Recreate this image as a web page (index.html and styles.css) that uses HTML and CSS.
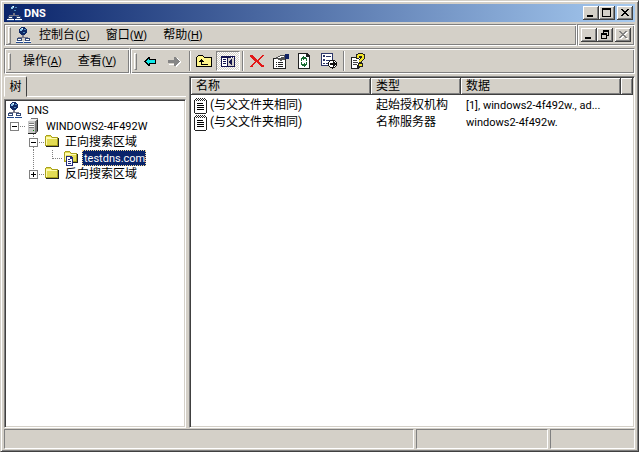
FILE: index.html
```html
<!DOCTYPE html>
<html lang="zh-CN">
<head>
<meta charset="utf-8">
<title>DNS</title>
<link rel="stylesheet" href="styles.css">
</head>
<body>
<svg class="defs" aria-hidden="true">
  <symbol id="dns" viewBox="0 0 16 16">
    <path d="M6 0h4v1h1v1h1v4h-1v1h-1v1H6V7H5V6H4V2h1V1h1z" fill="#102a66"/>
    <path d="M5 2h1V1h2v2H7v1H5z" fill="#8fc4e8"/><path d="M9 2h2v1H9zM8 5h2v1H8z" fill="#4d8cc0"/>
    <path d="M7 1h1v1H7z" fill="#fff"/>
    <path d="M7 8h2v2h4v1H3v-1h4z" fill="#778"/>
    <path d="M2 11h5v3H2zM10 11h5v3h-5z" fill="#334a78"/><path d="M3 12h3v1H3zM11 12h3v1h-3z" fill="#fff"/>
    <path d="M1 14h7v1H1zM9 14h7v1H9z" fill="#fff"/><path d="M1 15h7v1H1zM9 15h7v1H9z" fill="#224a90"/>
  </symbol>
  <symbol id="server" viewBox="0 0 16 16">
    <path d="M3 3l3-3h7v13l-3 3H3z" fill="#777"/><path d="M3 3h7v12H3z" fill="#c8c8c8"/>
    <path d="M3 3l3-2h6l-2 2z" fill="#eee"/><path d="M4 5h5v1H4zM4 7h5v1H4zM4 9h5v1H4z" fill="#777"/>
    <path d="M4 6h5v1H4zM4 8h5v1H4z" fill="#fff"/><path d="M8 12h1v1H8z" fill="#080"/><path d="M3 15h8v1H3zM12 2h1v11h-1z" fill="#222"/>
  </symbol>
  <symbol id="folder" viewBox="0 0 16 16">
    <path d="M1 2h1V1h5v1h1v1h6v9H1z" fill="#a9a11c"/>
    <path d="M2 2h5v1h1v1h5v7H2z" fill="#e3dc55"/>
    <path d="M2 3h5v1h6v1H3v6H2z" fill="#fffbb0"/>
    <path d="M14 4h1v9H2v-1h12z" fill="#222"/>
  </symbol>
  <symbol id="zone" viewBox="0 0 16 16">
    <path d="M1 2h1V1h5v1h1v1h6v9H1z" fill="#a9a11c"/>
    <path d="M2 2h5v1h1v1h5v7H2z" fill="#e3dc55"/>
    <path d="M2 3h5v1h6v1H3v5H2z" fill="#fffbb0"/><path d="M14 4h1v9H8v-1h6z" fill="#222"/>
    <path d="M3 6h5l2 2v8H3z" fill="#222a78"/><path d="M4 7h3v2h2v6H4z" fill="#fff"/>
    <path d="M5 9h2v1H5zM5 11h3v1H5zM5 13h3v1H5z" fill="#222a78"/>
  </symbol>
  <symbol id="record" viewBox="0 0 14 16">
    <path d="M1 2h11v13H1z" fill="#fff"/>
    <path d="M0 2h1v13H0zM12 2h1v13h-1zM1 15h11v1H1zM1 1h1v1H1zM3 1h1v1H3zM5 1h1v1H5zM7 1h1v1H7zM9 1h1v1H9zM11 1h1v1h-1zM2 0h1v1H2zM4 0h1v1H4zM6 0h1v1H6zM8 0h1v1H8zM10 0h1v1h-1zM2 2h1v1H2zM4 2h1v1H4zM6 2h1v1H6zM8 2h1v1H8zM10 2h1v1h-1z" fill="#222"/>
    <path d="M3 5h6v1H3zM3 7h7v1H3zM3 9h7v1H3zM3 11h7v1H3z" fill="#000"/>
  </symbol>
  <symbol id="min" viewBox="0 0 12 10"><path d="M2 7h6v2H2z"/></symbol>
  <symbol id="close" viewBox="0 0 12 10"><path d="M2 1h2v1h1v1h2V2h1V1h2v1H9v1H8v1H7v1h1v1h1v1h1v1H8V7H7V6H5v1H4v1H2V7h1V6h1V5h1V4H4V3H3V2H2z"/></symbol>
</svg>
<div class="window">
  <header class="titlebar">
    <svg class="icon"><use href="#dns"/></svg>
    <h1>DNS</h1>
    <div class="controls">
      <button class="ctl" aria-label="最小化"><svg><use href="#min"/></svg></button>
      <button class="ctl" aria-label="最大化"><svg viewBox="0 0 12 10"><path d="M1 0h9v9H1zM2 2v6h7V2z" fill-rule="evenodd"/></svg></button>
      <button class="ctl apart" aria-label="关闭"><svg><use href="#close"/></svg></button>
    </div>
  </header>

  <nav class="menubar" aria-label="菜单">
    <div class="band grow">
      <span class="grip"></span>
      <svg class="icon"><use href="#dns"/></svg>
      <button class="menu">控制台<span class="key">(<u>C</u>)</span></button>
      <button class="menu">窗口<span class="key">(<u>W</u>)</span></button>
      <button class="menu">帮助<span class="key">(<u>H</u>)</span></button>
    </div>
    <div class="band controls child">
      <button class="ctl" aria-label="最小化子窗口"><svg><use href="#min"/></svg></button>
      <button class="ctl" aria-label="还原子窗口"><svg viewBox="0 0 12 10"><path d="M4 0h6v6H8v3H2V3h2zM5 2v1h3v2h1V2zM3 5v3h4V5z" fill-rule="evenodd"/></svg></button>
      <button class="ctl apart off" disabled aria-label="关闭子窗口"><svg><use href="#close"/></svg></button>
    </div>
  </nav>

  <div class="toolbar">
    <div class="band actions">
      <span class="grip"></span>
      <button class="menu">操作<span class="key">(<u>A</u>)</span></button>
      <button class="menu">查看<span class="key">(<u>V</u>)</span></button>
    </div>
    <div class="band tools grow">
      <span class="grip"></span>
      <button class="tool" aria-label="后退"><svg viewBox="0 0 16 16"><path d="M1 8h1V7h1V6h1V5h1V4h2v2h6v5H7v2H5v-1H4v-1H3v-1H2V9H1z" fill="#000"/><path d="M3 8h1V7h1V6h1v1h6v3H6v1H5v-1H4V9H3z" fill="#10e8e8"/></svg></button>
      <button class="tool" aria-label="前进" disabled><svg viewBox="0 0 16 16"><path d="M9 5h2v1h1v1h1v1h1v2h-1v1h-1v1h-1v1h-1v1H9v-2H2v-1h7z" fill="#fff"/><path d="M1 7h6V4h2v1h1v1h1v1h1v1h1v1h-1v1h-1v1h-1v1H9v1H7v-3H1z" fill="#858585"/></svg></button>
      <span class="sep"></span>
      <button class="tool" aria-label="上一级"><svg viewBox="0 0 16 16"><path d="M0 4h1V3h1V2h5v1h1v1h8v10H0z" fill="#000"/><path d="M1 4h1V3h5v1h1v1h7v8H1z" fill="#fff58a"/><path d="M5 6h1v1h1v1h1v1H6v2h6v1H5V9H3V8h1V7h1z" fill="#000"/></svg></button>
      <button class="tool pressed" aria-label="显示/隐藏控制台树" aria-pressed="true"><svg viewBox="0 0 16 16"><path d="M1 3h14v11H1z" fill="#151550"/><path d="M2 5h5v8H2z" fill="#fff"/><path d="M8 5h6v8H8z" fill="#d4d0c8"/><path d="M3 6h3v1H3zM3 8h3v1H3zM3 10h3v1H3zM12 6v6h-1v-1h-1v-1H9V8h1V7h1V6z" fill="#151550"/><path d="M11 4h1v1h-1zM13 4h1v1h-1z" fill="#fff"/></svg></button>
      <span class="sep"></span>
      <button class="tool" aria-label="删除"><svg viewBox="0 0 16 16"><path d="M2 2h2v1h1v1h1v1h1v1h1v1h1V6h1V5h1V4h1V3h1V2h2v1h-1v1h-1v1h-1v1h-1v1h-1v2h1v1h1v1h1v1h2v2h-3v-1h-1v-1h-1v-1H9v-1H8v-1H7v1H6v1H5v1H4v2H1v-1h1v-1h1v-1h1v-1h1v-1h1V8H5V7H4V6H3V5H2V4H1V2z" fill="#e31818"/></svg></button>
      <button class="tool" aria-label="属性"><svg viewBox="0 0 16 16"><path d="M0 5h13v11H0z" fill="#222"/><path d="M1 6h11v9H1z" fill="#fff"/><path d="M3 9h1v1H3zM5 9h5v1H5zM3 11h1v1H3zM5 11h5v1H5zM3 13h1v1H3zM5 13h5v1H5z" fill="#222"/><path d="M3 4h2V3h2V2h5v5H9v1H7V7H5V6H3z" fill="#555"/><path d="M4 4h3V3h4v1H8v1H5z" fill="#fff"/><path d="M12 1h4v5h-4z" fill="#112364"/></svg></button>
      <button class="tool" aria-label="刷新"><svg viewBox="0 0 16 16"><path d="M1 0h9l3 3v13H1z" fill="#222"/><path d="M2 1h7v3h3v11H2z" fill="#fff"/><path d="M4 5h1V4h1V3h1v1h2v1h1v3H9V6H7v1H6V6H5v2H4zM4 9h1v2h2v-1h1v1h1V9h1v3H9v1H8v1H7v-1H5v-1H4z" fill="#176b31"/></svg></button>
      <button class="tool" aria-label="导出列表"><svg viewBox="0 0 16 16"><path d="M0 0h12v13H0z" fill="#2b3569"/><path d="M1 1h10v11H1z" fill="#fff"/><path d="M2 2h2v2H2zM2 6h2v2H2zM2 10h2v1H2zM5 3h5v1H5zM5 7h4v1H5zM5 10h2v1H5z" fill="#2b3569"/><circle cx="11.5" cy="11" r="4" fill="#fff" stroke="#111"/><path d="M9 10h3V8h1v1h1v1h1v2h-1v1h-1v1h-1v-2H9z" fill="#111"/></svg></button>
      <span class="sep"></span>
      <button class="tool" aria-label="帮助"><svg viewBox="0 0 16 16"><path d="M1 4h10v9l-3 3H1z" fill="#222"/><path d="M2 5h8v7H7v3H2z" fill="#fff"/><path d="M3 7h4v1H3zM3 9h5v1H3zM3 11h4v1H3z" fill="#444"/><path d="M6 1h2V0h5v1h2v5h-1v1h-1v1h-1v2h1v4H8v-4h1V6h1V5H9v1H6z" fill="#222"/><path d="M7 2h1V1h5v1h1v4h-1v1h-1v1h-1v1H9V7h1V6h1V5h1V3H9v2H7zM9 11h3v2H9z" fill="#f4e52b"/></svg></button>
    </div>
  </div>

  <main class="panes">
    <section class="left">
      <div class="tabs" role="tablist"><button class="tab" role="tab" aria-selected="true">树</button></div>
      <ul class="tree well">
        <li><svg class="icon"><use href="#dns"/></svg><span class="label latin">DNS</span></li>
        <li><svg class="cell" viewBox="0 0 19 16"><path d="M4 4h9v9H4z" fill="#808080"/><path d="M5 5h7v7H5z" fill="#fff"/><path d="M6 8h5v1H6z"/><path d="M14 8.500h5" class="dots"/></svg><svg class="icon"><use href="#server"/></svg><span class="label latin">WINDOWS2-4F492W</span></li>
        <li><span class="cell"></span><svg class="cell" viewBox="0 0 19 16"><path d="M8.500 0v4M14 8.500h5M8.500 13v3" class="dots"/><path d="M4 4h9v9H4z" fill="#808080"/><path d="M5 5h7v7H5z" fill="#fff"/><path d="M6 8h5v1H6z"/></svg><svg class="icon"><use href="#folder"/></svg><span class="label">正向搜索区域</span></li>
        <li><span class="cell"></span><svg class="cell" viewBox="0 0 19 16"><path d="M8.500 0v16" class="dots"/></svg><svg class="cell" viewBox="0 0 19 16"><path d="M8.500 0v9M9 8.500h10" class="dots"/></svg><svg class="icon"><use href="#zone"/></svg><span class="label latin selected">testdns.com</span></li>
        <li><span class="cell"></span><svg class="cell" viewBox="0 0 19 16"><path d="M8.500 0v4M14 8.500h5" class="dots"/><path d="M4 4h9v9H4z" fill="#808080"/><path d="M5 5h7v7H5z" fill="#fff"/><path d="M6 8h5v1H6zM8 6h1v5H8z"/></svg><svg class="icon"><use href="#folder"/></svg><span class="label">反向搜索区域</span></li>
      </ul>
    </section>
    <section class="list well">
      <table>
        <colgroup><col class="name"><col class="type"><col class="data"><col></colgroup>
        <thead><tr><th>名称</th><th>类型</th><th>数据</th><th aria-label="空"></th></tr></thead>
        <tbody>
          <tr><td class="first"><div class="entry"><svg class="rec"><use href="#record"/></svg>(与父文件夹相同)</div></td><td>起始授权机构</td><td class="latin">[1], windows2-4f492w., ad...</td><td></td></tr>
          <tr><td class="first"><div class="entry"><svg class="rec"><use href="#record"/></svg>(与父文件夹相同)</div></td><td>名称服务器</td><td class="latin">windows2-4f492w.</td><td></td></tr>
        </tbody>
      </table>
    </section>
  </main>

  <footer class="status"><span></span><span></span><span></span></footer>
</div>
</body>
</html>
```
FILE: styles.css
```css
* { box-sizing: border-box; }
body {
  margin: 0;
  background: #d4d0c8;
  color: #000;
  font: 12px/16px Roboto, "Noto Sans CJK SC", sans-serif;
}
button { margin: 0; padding: 0; border: 0; background: none; color: inherit; font: inherit; }
svg { display: block; flex: none; shape-rendering: crispEdges; }
.defs { position: absolute; width: 0; height: 0; }
.icon { width: 16px; height: 16px; }
.latin, .key { font-size: 11px; }

.window {
  display: flex;
  flex-direction: column;
  min-height: 100vh;
  padding: 3px 3px 2px 3px;
  border: 1px solid;
  border-color: #d4d0c8 #404040 #404040 #d4d0c8;
  box-shadow: inset 1px 1px #fff, inset -1px -1px #808080;
}

.titlebar {
  display: flex;
  align-items: center;
  height: 18px;
  padding: 0 2px;
  background: linear-gradient(to right, #0a246a, #a6caf0);
  color: #fff;
}
.titlebar h1 { margin: 0; padding: 2px 0 0 2px; font-size: 11px; line-height: 16px; font-weight: 700; }
.controls { display: flex; align-items: center; margin-left: auto; }
.ctl {
  display: flex;
  align-items: center;
  justify-content: center;
  width: 16px;
  height: 14px;
  background: #d4d0c8;
  box-shadow: inset -1px -1px #404040, inset 1px 1px #fff, inset -2px -2px #808080;
}
.ctl svg { width: 12px; height: 10px; fill: #000; }
.ctl.apart { margin-left: 2px; }
.ctl.off svg { fill: #808080; filter: drop-shadow(1px 1px #fff); }

.menubar, .toolbar { display: flex; margin-top: 2px; }
.menubar { height: 22px; }
.toolbar { height: 26px; }
.band {
  display: flex;
  align-items: center;
  padding: 0 3px;
  border: 1px solid;
  border-color: #808080 #fff #fff #808080;
  box-shadow: inset 1px 1px #fff, inset -1px -1px #808080;
}
.grow { flex: 1; }
.grip { width: 3px; height: 17px; margin-right: 4px; border: 1px solid; border-color: #fff #808080 #808080 #fff; }
.menu { padding: 0 8px; white-space: nowrap; }
.actions { width: 126px; }
.tools .grip { margin-right: 2px; }
.sep { width: 2px; height: 20px; margin: 0 1px 0 2px; border-left: 1px solid #808080; border-right: 1px solid #fff; }
.tool { display: flex; align-items: center; justify-content: center; width: 24px; height: 20px; }
.tool svg { width: 16px; height: 16px; }
.pressed {
  border: 1px solid;
  border-color: #808080 #fff #fff #808080;
  background: repeating-conic-gradient(#fff 0 25%, #d4d0c8 0 50%) 0 0 / 2px 2px;
}

.panes { display: grid; grid-template-columns: 182px 1fr; gap: 3px; flex: 1; margin-top: 2px; }
.left { display: flex; flex-direction: column; }
.tabs { display: flex; height: 21px; margin-bottom: 2px; border-bottom: 1px solid #fff; }
.tab {
  width: 23px;
  height: 21px;
  border: 1px solid;
  border-color: #fff #404040 #d4d0c8 #fff;
  border-radius: 2px 2px 0 0;
  background: #d4d0c8;
}
.well {
  border: 1px solid;
  border-color: #808080 #fff #fff #808080;
  background: #fff;
  box-shadow: inset 1px 1px #404040, inset -1px -1px #d4d0c8;
}
.tree { flex: 1; margin: 0; padding: 2px 1px 1px; list-style: none; }
.tree li { display: flex; align-items: center; height: 16px; }
.cell { width: 19px; height: 16px; }
.dots { fill: none; stroke: #808080; stroke-dasharray: 1 1; }
.label { margin-left: 3px; padding: 1px 1px 0 2px; line-height: 15px; white-space: nowrap; }
.label.selected { background: #0a246a; color: #fff; outline: 1px dotted #f5db95; outline-offset: -1px; }

.list { padding: 1px; }
table { width: 100%; table-layout: fixed; border-collapse: separate; border-spacing: 0; }
.name { width: 180px; }
.type { width: 90px; }
.data { width: 160px; }
th {
  height: 17px;
  padding: 0 5px;
  background: #d4d0c8;
  box-shadow: inset -1px -1px #404040, inset 1px 1px #fff, inset -2px -2px #808080;
  font-weight: 400;
  line-height: 17px;
  text-align: left;
}
td { height: 17px; padding: 0 5px; line-height: 17px; white-space: nowrap; }
td.first { padding-left: 3px; }
tbody::before { content: ""; display: block; height: 2px; }
.entry { display: flex; align-items: center; gap: 2px; }
.rec { width: 14px; height: 16px; }

.status { display: grid; grid-template-columns: 1fr 132px 85px; gap: 2px; height: 20px; margin-top: 1px; }
.status span { border: 1px solid; border-color: #808080 #fff #fff #808080; }
```
